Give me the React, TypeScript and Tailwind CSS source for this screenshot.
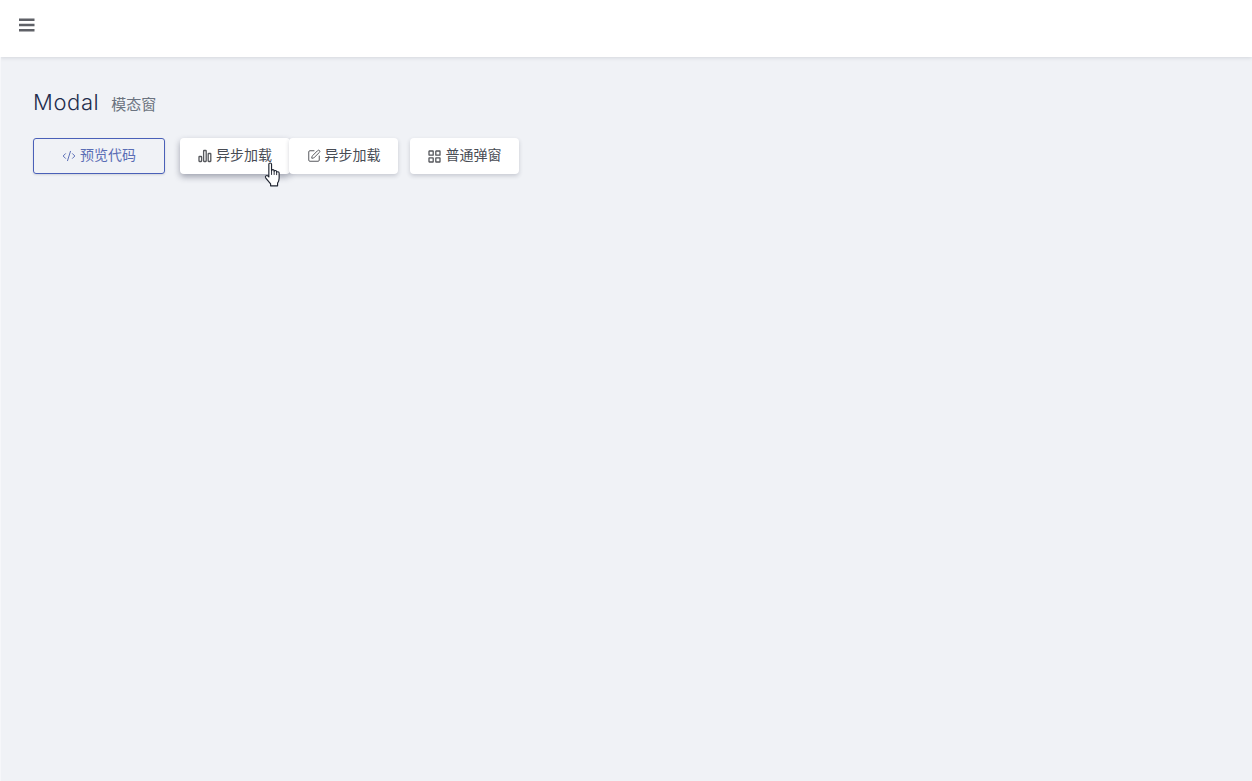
import { CodeXml, SquarePen } from "lucide-react";
import type { ReactNode } from "react";

const font = "font-['Inter','Noto_Sans_CJK_SC',sans-serif]";

const MenuIcon = () => (
  <svg width="16" height="14" viewBox="0 0 16 14" className="text-[#5f6167]">
    <path d="M0 0.5h15.5v2.4H0zM0 5.8h15.5v2.4H0zM0 11.1h15.5v2.4H0z" fill="currentColor" />
  </svg>
);

const BarsIcon = () => (
  <svg width="14" height="14" viewBox="0 0 14 14" fill="none" stroke="#55575c" strokeWidth="1.3">
    <rect x="1" y="7.5" width="2.6" height="5" rx="0.5" />
    <rect x="5.6" y="1.5" width="2.6" height="11" rx="0.5" />
    <rect x="10.2" y="4.5" width="2.6" height="8" rx="0.5" />
  </svg>
);

const GridIcon = () => (
  <svg width="13" height="13" viewBox="0 0 13 13" fill="none" stroke="#55575c" strokeWidth="1.3">
    <rect x="1" y="1" width="4.2" height="4.2" rx="0.3" />
    <rect x="7.8" y="1" width="4.2" height="4.2" rx="0.3" />
    <rect x="1" y="7.8" width="4.2" height="4.2" rx="0.3" />
    <rect x="7.8" y="7.8" width="4.2" height="4.2" rx="0.3" />
  </svg>
);

const HandCursor = () => (
  <svg
    className="absolute left-[84px] top-[24px]"
    width="18"
    height="26"
    viewBox="0 0 17 25"
  >
    <path
      d="M4.5 2.2c0-1.6 2.6-1.6 2.6 0v6.2c.2-1.4 2.4-1.4 2.5 0v.6c.2-1.2 2.3-1.2 2.4.2v.8c.3-1 2.3-.9 2.4.5v5.2c0 2.2-.7 3.4-1.5 4.6v2.6H6.2v-1.8L1.6 15.4c-1.1-1.5.7-3.2 2.1-1.9l.8.9z"
      fill="#fff"
      stroke="#1f2430"
      strokeWidth="1.1"
      strokeLinejoin="round"
    />
    <path d="M7.1 8.4v4M9.6 9v3.4M12 10v2.6" stroke="#1f2430" strokeWidth="0.9" fill="none" />
  </svg>
);

const CardButton = ({
  icon,
  label,
  className,
  children,
}: {
  icon: ReactNode;
  label: string;
  className: string;
  children?: ReactNode;
}) => (
  <button
    className={`relative flex h-9 items-center justify-center gap-[4px] rounded bg-white text-[14px] text-[#484c54] ${className}`}
  >
    {icon}
    <span className="pb-[4px]">{label}</span>
    {children}
  </button>
);

const App = () => {
  return (
    <div className={`flex h-[781px] flex-col overflow-hidden bg-[#f0f2f6] ${font}`}>
      <header className="flex h-[57px] shrink-0 items-center bg-white pb-[7px] pl-[19px] shadow-[0_1px_4px_rgba(0,21,41,0.12)]">
        <MenuIcon />
      </header>
      <main className="flex-1 border-l border-[#f6f7fa] px-[32px] pt-[32px]">
        <div className="flex h-[26px] items-end gap-3">
          <h1 className="text-[22px] leading-[26px] font-light tracking-[0.6px] text-[#1f2d4d]">
            Modal
          </h1>
          <span className="text-[15px] leading-[20px] text-[#6b7380]">模态窗</span>
        </div>
        <div className="mt-[23px] flex">
          <button className="flex h-9 w-[132px] items-center justify-center gap-[4px] rounded-[3px] border border-[#4a60b8] text-[14px] text-[#5a6db5] shadow-[0_1px_2px_rgba(40,45,70,0.15)]">
            <CodeXml size={14} strokeWidth={1.7} />
            <span className="pb-[4px]">预览代码</span>
          </button>
          <CardButton
            icon={<BarsIcon />}
            label="异步加载"
            className="ml-[15px] w-[110px] shadow-[0_3px_6px_rgba(40,45,70,0.4)]"
          >
            <HandCursor />
          </CardButton>
          <CardButton
            icon={<SquarePen size={14} strokeWidth={1.7} className="text-[#55575c]" />}
            label="异步加载"
            className="ml-[-1px] w-[109px] shadow-[0_2px_4px_rgba(40,45,70,0.2)]"
          />
          <CardButton
            icon={<GridIcon />}
            label="普通弹窗"
            className="ml-3 w-[109px] gap-[5px] shadow-[0_2px_4px_rgba(40,45,70,0.2)]"
          />
        </div>
      </main>
    </div>
  );
};

export default App;
